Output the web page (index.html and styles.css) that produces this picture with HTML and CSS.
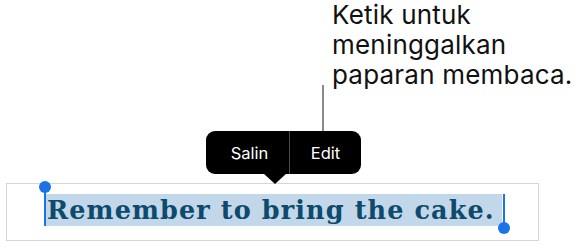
FILE: index.html
```html
<!DOCTYPE html>
<html>
<head>
<meta charset="utf-8">
<link rel="stylesheet" href="styles.css">
</head>
<body>
<div class="page">
  <div class="callout">Ketik untuk<br>meninggalkan<br>paparan membaca.</div>
  <div class="leader"></div>
  <div class="menu">
    <span class="item salin">Salin</span>
    <span class="sep"></span>
    <span class="item edit">Edit</span>
  </div>
  <div class="field">
    <span class="sel">
      <span class="handle start"></span>Remember to bring the cake.<span class="handle end"></span>
    </span>
  </div>
</div>
</body>
</html>
```
FILE: styles.css
```css
html, body { margin: 0; padding: 0; background: #fff; }
.page {
  width: 588px;
  height: 250px;
  position: relative;
  font-family: "Inter", "Roboto", sans-serif;
}
.callout {
  margin-left: 332px;
  padding-top: 0;
  font-size: 26px;
  line-height: 30px;
  color: #111;
  height: 85px;
  letter-spacing: 0.2px;
}
.leader {
  margin-left: 322px;
  width: 2px;
  height: 46px;
  background: #8a8a8a;
}
.menu {
  margin-left: 206px;
  width: 155px;
  height: 43px;
  background: #000;
  border-radius: 9px;
  display: flex;
  align-items: center;
  position: relative;
  color: #fff;
  font-size: 16.5px;
}
.menu::after {
  content: "";
  position: absolute;
  left: 57px;
  bottom: -10px;
  border-left: 12px solid transparent;
  border-right: 12px solid transparent;
  border-top: 11px solid #000;
}
.item { flex: none; text-align: center; }
.salin { width: 79px; padding-left: 4px; }
.edit { width: 71px; }
.sep { width: 1px; align-self: stretch; background: #4a4a4a; }
.field {
  margin-left: 6px;
  margin-top: 9px;
  width: 531px;
  height: 56px;
  border: 1px solid #d6d6d6;
  box-sizing: content-box;
}
.sel {
  display: inline-block;
  position: relative;
  margin-left: 38px;
  margin-top: 10px;
  background: #c2d7ea;
  height: 32px;
  line-height: 33px;
  padding-left: 2px;
  padding-right: 7px;
  font-family: "DejaVu Serif", serif;
  font-weight: bold;
  font-size: 25.5px;
  letter-spacing: 1.1px;
  color: #0d4a6c;
  white-space: nowrap;
}
.handle {
  position: absolute;
  width: 2px;
  background: #1a74e8;
}
.handle::after {
  content: "";
  position: absolute;
  width: 12px;
  height: 12px;
  border-radius: 50%;
  background: #1a74e8;
  left: -5px;
}
.handle.start { left: -1px; top: -7px; height: 39px; }
.handle.start::after { top: -6px; }
.handle.end { right: -3px; top: 0; height: 34px; }
.handle.end::after { bottom: -6px; }
```
